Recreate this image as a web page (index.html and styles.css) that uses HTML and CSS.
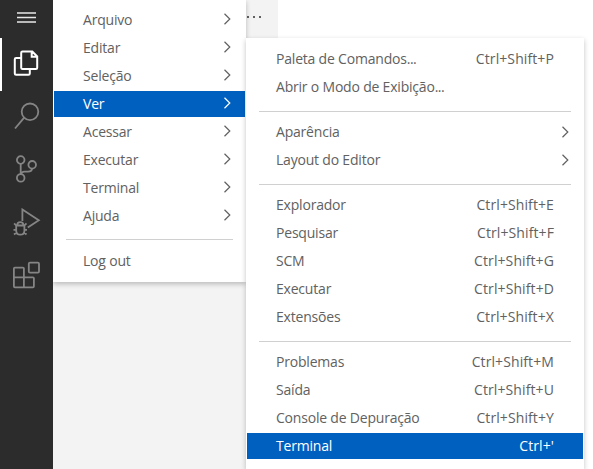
FILE: index.html
```
<!DOCTYPE html>
<html lang="pt-BR">
<head>
<meta charset="utf-8">
<title>Editor</title>
<link rel="stylesheet" href="styles.css">
</head>
<body>
<svg class="defs" width="0" height="0"><symbol id="chev" viewBox="0 0 8 12"><path d="M1.5 .8 6.8 6 1.5 11.2" fill="none" stroke="currentColor" stroke-width="1.2"/></symbol></svg>
<div class="app">
  <nav class="activity">
    <div class="burger"><svg width="20" height="12" viewBox="0 0 20 12"><path d="M0 1h19M0 5.5h19M0 10h19" stroke="#e7e7e7" stroke-width="1.7"/></svg></div>
    <div class="tool active"><svg viewBox="0 0 28 28"><path d="M9.5 2.5h9.8l4.9 5v11.2q0 1.3-1.3 1.3H9.5q-1.3 0-1.3-1.3V3.8q0-1.3 1.3-1.3zM18.7 2.8v5h5M8.2 9H3.1q-1.3 0-1.3 1.3v14.2q0 1.3 1.3 1.3h12.4q1.3 0 1.3-1.3V20"/></svg></div>
    <div class="tool"><svg viewBox="0 0 28 28"><circle cx="17" cy="9.8" r="8.3"/><path d="M11 15.8 2 26.5"/></svg></div>
    <div class="tool"><svg viewBox="0 0 28 28"><circle cx="7.7" cy="5" r="3.8"/><circle cx="7.7" cy="22.9" r="3.8"/><circle cx="19.2" cy="9.8" r="3.8"/><path d="M7.7 8.8v10.3M19.1 13.6q-.5 3.1-4.1 3.1h-3.5q-3.1 0-3.8 3"/></svg></div>
    <div class="tool"><svg viewBox="0 0 28 28"><path d="M9.4 13V1.5L25.8 12.3l-11 7.2"/><path d="M3.2 17.5h8.2v5.2q0 4-4.1 4t-4.1-4zM4.2 17.3q0-3.2 3.1-3.2t3.1 3.2M.5 21.8h2.7M11.4 21.8H14M1.1 15.3l2.5 2.5M13.5 15.3 11 17.8M1 26.5l2.8-2.2M13.5 26.5l-2.7-2.2"/></svg></div>
    <div class="tool"><svg viewBox="0 0 28 28"><path d="M1.9 6.6h8q1 0 1 1v8.7h9q1 0 1 1v8q0 1-1 1h-18q-1 0-1-1V7.6q0-1 1-1zM.9 16.3h10v10"/><rect x="15.8" y="1.6" width="10.2" height="10" rx="1.2"/></svg></div>
  </nav>
  <aside class="sidebar"><span class="dots"><i></i><i></i><i></i></span></aside>
  <main class="editor"></main>
</div>

<div class="menu main-menu">
  <div class="item"><span>Arquivo</span><svg><use href="#chev"/></svg></div>
  <div class="item"><span>Editar</span><svg><use href="#chev"/></svg></div>
  <div class="item"><span>Seleção</span><svg><use href="#chev"/></svg></div>
  <div class="item selected"><span>Ver</span><svg><use href="#chev"/></svg></div>
  <div class="item"><span>Acessar</span><svg><use href="#chev"/></svg></div>
  <div class="item"><span>Executar</span><svg><use href="#chev"/></svg></div>
  <div class="item"><span>Terminal</span><svg><use href="#chev"/></svg></div>
  <div class="item"><span>Ajuda</span><svg><use href="#chev"/></svg></div>
  <hr>
  <div class="item"><span>Log out</span></div>
</div>

<div class="menu sub-menu">
  <div class="item"><span>Paleta de Comandos<b>...</b></span><kbd>Ctrl+Shift+P</kbd></div>
  <div class="item"><span>Abrir o Modo de Exibição<b>...</b></span></div>
  <hr>
  <div class="item"><span>Aparência</span><svg><use href="#chev"/></svg></div>
  <div class="item"><span>Layout do Editor</span><svg><use href="#chev"/></svg></div>
  <hr>
  <div class="item"><span>Explorador</span><kbd>Ctrl+Shift+E</kbd></div>
  <div class="item"><span>Pesquisar</span><kbd>Ctrl+Shift+F</kbd></div>
  <div class="item"><span>SCM</span><kbd>Ctrl+Shift+G</kbd></div>
  <div class="item"><span>Executar</span><kbd>Ctrl+Shift+D</kbd></div>
  <div class="item"><span>Extensões</span><kbd>Ctrl+Shift+X</kbd></div>
  <hr>
  <div class="item"><span>Problemas</span><kbd>Ctrl+Shift+M</kbd></div>
  <div class="item"><span>Saída</span><kbd>Ctrl+Shift+U</kbd></div>
  <div class="item"><span>Console de Depuração</span><kbd>Ctrl+Shift+Y</kbd></div>
  <div class="item selected"><span>Terminal</span><kbd>Ctrl+'</kbd></div>
</div>
</body>
</html>
```
FILE: styles.css
```
* { box-sizing: border-box; }
body {
  margin: 0;
  height: 469px;
  overflow: hidden;
  background: #fff;
  color: #616161;
  font: 14px/26px "Open Sans", "Noto Sans", sans-serif;
}
.defs { position: absolute; }
.app { display: flex; height: 469px; }
.activity { width: 53px; background: #2c2c2c; }
.burger { height: 38px; padding: 12px 0 0 17px; }
.burger svg { display: block; }
.tool {
  height: 53px;
  padding: 11px 0 0 13px;
  color: #858585;
}
.tool svg {
  display: block;
  width: 28px;
  height: 28px;
  fill: none;
  stroke: currentColor;
  stroke-width: 1.8;
}
.tool.active { color: #fff; box-shadow: inset 2px 0 #fff; }
.tool.active svg { stroke-width: 2; }
.sidebar { width: 225px; background: #f3f3f3; }
.dots { display: flex; gap: 4px; padding: 16px 0 0 194px; }
.dots i { width: 2px; height: 2px; background: #616161; }
.editor { flex: 1; }
.menu {
  position: absolute;
  display: flex;
  flex-direction: column;
  background: #fff;
  box-shadow: 0 2px 5px rgba(0, 0, 0, .24);
}
.main-menu { left: 53px; top: 0; width: 193px; height: 282px; padding: 6px 1px 0; clip-path: inset(0 -8px -8px 0); }
.sub-menu { left: 246px; top: 38px; width: 338px; height: 431px; padding: 7px 1px 0; }
.item {
  display: flex;
  flex: none;
  align-items: center;
  height: 26px;
  margin: 1px 0;
  padding: 0 29px;
  letter-spacing: -.2px;
  white-space: nowrap;
}
.item b { font-weight: 400; letter-spacing: -.5px; }
.main-menu .item { padding-right: 14px; }
.item svg { width: 8px; height: 12px; margin-left: auto; }
.main-menu .item svg { margin-bottom: 2px; }
.sub-menu .item svg { margin-right: -15px; }
.item kbd { margin-left: auto; font: inherit; letter-spacing: .1px; }
.item.selected { background: #0060c0; color: #fff; }
hr {
  flex: none;
  height: 1px;
  margin: 9px 12px 7px;
  border: 0;
  background: #d0d0d0;
}
.sub-menu hr { margin: 10px 12px 6px; }
```
